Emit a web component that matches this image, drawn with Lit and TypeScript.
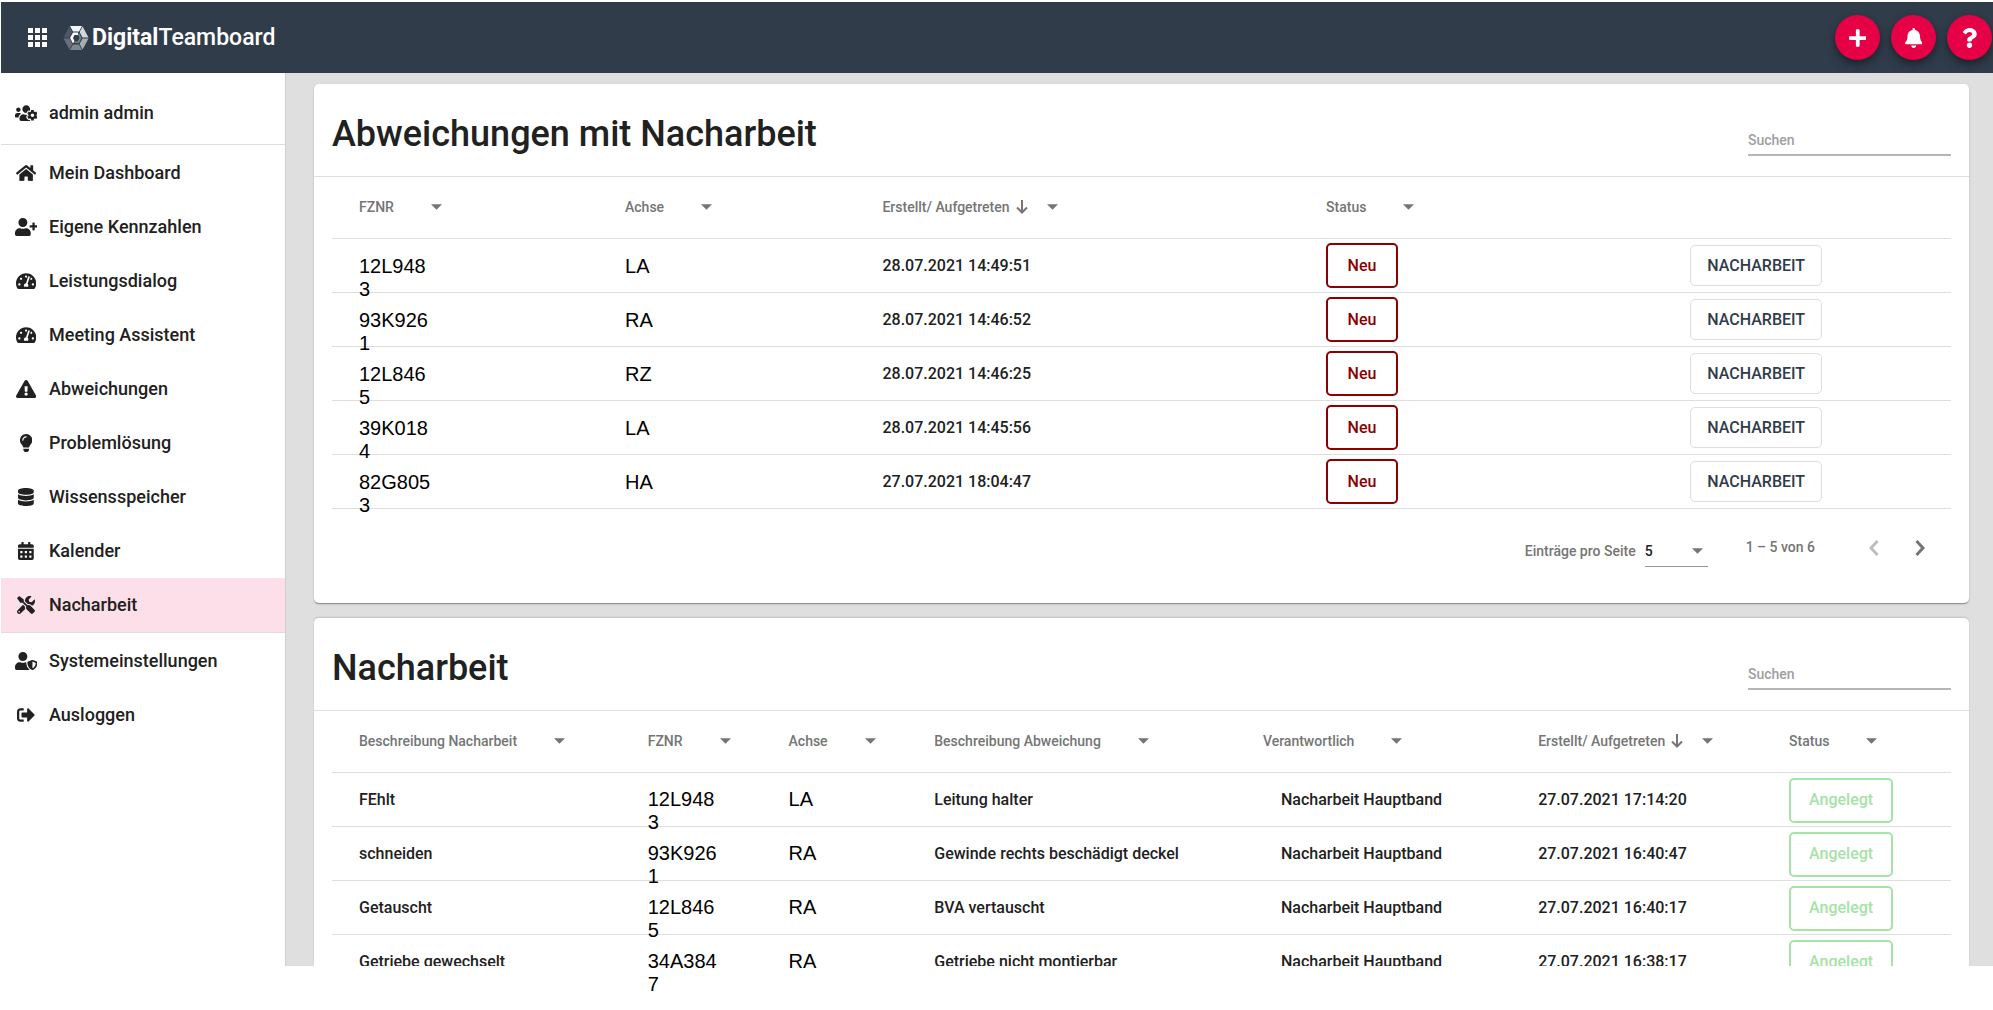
import { LitElement, html, css, svg, nothing } from "lit";
import { customElement, property } from "lit/decorators.js";
import { classMap } from "lit/directives/class-map.js";

type IconDef = { w: number; d: string };

const calCells = [
  [64, 256], [192, 256], [320, 256], [64, 384], [192, 384], [320, 384],
].map(([x, y]) => `M${x} ${y + 12}c0-6.6 5.4-12 12-12h40c6.6 0 12 5.4 12 12v40c0 6.6-5.4 12-12 12h-40c-6.6 0-12-5.4-12-12z`).join("");

const ICONS: Record<string, IconDef> = {
  users: { w: 640, d: "M610.5 341.3c2.6-14.1 2.6-28.5 0-42.6l25.8-14.9c3-1.7 4.3-5.2 3.3-8.5-6.7-21.6-18.2-41.2-33.2-57.4-2.3-2.5-6-3.1-9-1.4l-25.8 14.9c-10.9-9.3-23.4-16.5-36.9-21.3v-29.8c0-3.4-2.4-6.4-5.7-7.1-22.3-5-45-4.8-66.2 0-3.3.7-5.7 3.7-5.7 7.1v29.8c-13.5 4.8-26 12-36.9 21.3l-25.8-14.9c-2.9-1.7-6.7-1.1-9 1.4-15 16.2-26.5 35.8-33.2 57.4-1 3.3.4 6.8 3.3 8.5l25.8 14.9c-2.6 14.1-2.6 28.5 0 42.6l-25.8 14.9c-3 1.7-4.3 5.2-3.3 8.5 6.7 21.6 18.2 41.1 33.2 57.4 2.3 2.5 6 3.1 9 1.4l25.8-14.9c10.9 9.3 23.4 16.5 36.9 21.3v29.8c0 3.4 2.4 6.4 5.7 7.1 22.3 5 45 4.8 66.2 0 3.3-.7 5.7-3.7 5.7-7.1v-29.8c13.5-4.8 26-12 36.9-21.3l25.8 14.9c2.9 1.7 6.7 1.1 9-1.4 15-16.2 26.5-35.8 33.2-57.4 1-3.3-.4-6.8-3.3-8.5l-25.8-14.9zM496 368.5c-26.8 0-48.5-21.8-48.5-48.5s21.8-48.5 48.5-48.5 48.5 21.8 48.5 48.5-21.7 48.5-48.5 48.5zM96 224c35.3 0 64-28.7 64-64s-28.7-64-64-64-64 28.7-64 64 28.7 64 64 64zm224 32c1.9 0 3.7-.5 5.6-.6 8.3-21.7 20.5-42.1 36.3-59.2 7.4-8 17.9-12.6 28.9-12.6 6.9 0 13.7 1.8 19.6 5.3l7.9 4.6c.8-.5 1.6-.9 2.4-1.4 7-14.6 11.2-30.8 11.2-48 0-61.9-50.1-112-112-112S208 82.1 208 144c0 61.9 50.1 112 112 112zm105.2 194.5c-2.3-1.2-4.6-2.6-6.8-3.9-8.2 4.8-15.3 9.8-27.5 9.8-10.9 0-21.4-4.6-28.9-12.6-18.3-19.8-32.3-43.9-40.2-69.6-10.7-34.5 24.9-49.7 25.8-50.3-.1-2.6-.1-5.2 0-7.8l-7.9-4.6c-3.8-2.2-7-5-9.8-8.1-3.3.2-6.5.6-9.8.6-24.6 0-47.6-6-68.5-16h-8.3C179.6 288 128 339.6 128 403.2V432c0 26.5 21.5 48 48 48h255.4c-3.7-6-6.2-12.8-6.2-20.3v-9.2zM173.1 274.6C161.5 263.1 145.6 256 128 256H64c-35.3 0-64 28.7-64 64v32c0 17.7 14.3 32 32 32h65.9c6.3-47.4 34.9-87.3 75.2-109.4z" },
  home: { w: 576, d: "M280.37 148.26L96 300.11V464a16 16 0 0 0 16 16l112.06-.29a16 16 0 0 0 15.92-16V368a16 16 0 0 1 16-16h64a16 16 0 0 1 16 16v95.64a16 16 0 0 0 16 16.05L464 480a16 16 0 0 0 16-16V300L295.67 148.26a12.19 12.19 0 0 0-15.3 0zM571.6 251.47L488 182.56V44.05a12 12 0 0 0-12-12h-56a12 12 0 0 0-12 12v72.61L318.47 43a48 48 0 0 0-61 0L4.34 251.47a12 12 0 0 0-1.6 16.9l25.5 31A12 12 0 0 0 45.15 301l235.22-193.74a12.19 12.19 0 0 1 15.3 0L530.9 301a12 12 0 0 0 16.9-1.6l25.5-31a12 12 0 0 0-1.7-16.93z" },
  userPlus: { w: 640, d: "M624 208h-64v-64c0-8.8-7.2-16-16-16h-32c-8.8 0-16 7.2-16 16v64h-64c-8.8 0-16 7.2-16 16v32c0 8.8 7.2 16 16 16h64v64c0 8.8 7.2 16 16 16h32c8.8 0 16-7.2 16-16v-64h64c8.8 0 16-7.2 16-16v-32c0-8.8-7.2-16-16-16zm-400 48c70.7 0 128-57.3 128-128S294.7 0 224 0 96 57.3 96 128s57.3 128 128 128zm89.6 32h-16.7c-22.2 10.2-46.9 16-72.9 16s-50.6-5.8-72.9-16h-16.7C60.2 288 0 348.2 0 422.4V464c0 26.5 21.5 48 48 48h352c26.5 0 48-21.5 48-48v-41.6c0-74.2-60.2-134.4-134.4-134.4z" },
  gauge: { w: 576, d: "M288 32C128.94 32 0 160.94 0 320c0 52.8 14.25 102.26 39.06 144.8 5.61 9.62 16.3 15.2 27.44 15.2h443c11.14 0 21.83-5.58 27.44-15.2C561.75 422.26 576 372.8 576 320c0-159.06-128.94-288-288-288zm0 64c14.71 0 26.58 10.13 30.32 23.65-1.11 2.26-2.64 4.23-3.45 6.67l-9.22 27.67c-5.13 3.49-10.97 6.01-17.64 6.01-17.67 0-32-14.33-32-32S270.33 96 288 96zM96 384c-17.67 0-32-14.33-32-32s14.33-32 32-32 32 14.33 32 32-14.33 32-32 32zm48-160c-17.67 0-32-14.33-32-32s14.33-32 32-32 32 14.33 32 32-14.33 32-32 32zm246.77-72.41l-61.33 184C343.13 347.33 352 364.54 352 384c0 11.72-3.38 22.55-8.88 32H232.88c-5.5-9.45-8.88-20.28-8.88-32 0-33.94 26.5-61.43 59.9-63.59l61.34-184.01c4.17-12.56 17.73-19.45 30.36-15.17 12.57 4.19 19.35 17.79 15.17 30.36zm14.66 57.2l15.52-46.55c3.47-1.29 7.13-2.23 11.05-2.23 17.67 0 32 14.33 32 32s-14.33 32-32 32c-11.38-.01-20.89-6.28-26.57-15.22zM480 384c-17.67 0-32-14.33-32-32s14.33-32 32-32 32 14.33 32 32-14.33 32-32 32z" },
  warning: { w: 576, d: "M569.517 440.013C587.975 472.007 564.806 512 527.94 512H48.054c-36.937 0-59.999-40.055-41.577-71.987L246.423 23.985c18.467-32.009 64.72-31.951 83.154 0l239.94 416.028zM288 354c-25.405 0-46 20.595-46 46s20.595 46 46 46 46-20.595 46-46-20.595-46-46-46zm-43.673-165.346l7.418 136c.347 6.364 5.609 11.346 11.982 11.346h48.546c6.373 0 11.635-4.982 11.982-11.346l7.418-136c.375-6.874-5.098-12.654-11.982-12.654h-63.383c-6.884 0-12.356 5.78-11.981 12.654z" },
  bulb: { w: 352, d: "M96.06 454.35c.01 6.29 1.87 12.45 5.36 17.69l17.09 25.69a31.99 31.99 0 0 0 26.64 14.28h61.71a31.99 31.99 0 0 0 26.64-14.28l17.09-25.69a31.989 31.989 0 0 0 5.36-17.69l.04-38.35H96.01l.05 38.35zM0 176c0 44.37 16.45 84.85 43.56 115.78 16.52 18.85 42.36 58.23 52.21 91.45.04.26.07.52.11.78h160.24c.04-.26.07-.51.11-.78 9.85-33.22 35.69-72.6 52.21-91.45C335.55 260.85 352 220.37 352 176 352 78.61 272.91-.3 175.45 0 73.44.31 0 82.97 0 176zm176-80c-44.11 0-80 35.89-80 80 0 8.84-7.16 16-16 16s-16-7.16-16-16c0-61.76 50.24-112 112-112 8.84 0 16 7.16 16 16s-7.16 16-16 16z" },
  database: { w: 448, d: "M448 73.143v45.714C448 159.143 347.667 192 224 192S0 159.143 0 118.857V73.143C0 32.857 100.333 0 224 0s224 32.857 224 73.143zM448 176v102.857C448 319.143 347.667 352 224 352S0 319.143 0 278.857V176c48.125 33.143 136.208 48.572 224 48.572S399.874 209.143 448 176zm0 160v102.857C448 479.143 347.667 512 224 512S0 479.143 0 438.857V336c48.125 33.143 136.208 48.572 224 48.572S399.874 369.143 448 336z" },
  calendar: { w: 448, d: "M0 464c0 26.5 21.5 48 48 48h352c26.5 0 48-21.5 48-48V192H0zM400 64h-48V16c0-8.8-7.2-16-16-16h-32c-8.8 0-16 7.2-16 16v48H160V16c0-8.8-7.2-16-16-16h-32c-8.8 0-16 7.2-16 16v48H48C21.5 64 0 85.5 0 112v48h448v-48c0-26.5-21.5-48-48-48z" + calCells },
  tools: { w: 512, d: "M501.1 395.7L384 278.6c-23.1-23.1-57.6-27.6-85.4-13.9L192 158.1V96L64 0 0 64l96 128h62.1l106.6 106.6c-13.6 27.8-9.2 62.3 13.9 85.4l117.1 117.1c14.6 14.6 38.2 14.6 52.7 0l52.7-52.7c14.5-14.6 14.5-38.2 0-52.7zM331.7 225c28.3 0 54.9 11 74.9 31l19.4 19.4c15.8-6.9 30.8-16.5 43.8-29.5 37.1-37.1 49.7-89.3 37.9-136.7-2.2-9-13.5-12.1-20.1-5.5l-74.4 74.4-67.9-11.3L334 98.9l74.4-74.4c6.6-6.6 3.4-17.9-5.7-20.2-47.4-11.7-99.6.9-136.6 37.9-28.5 28.5-41.9 66.1-41.2 103.6l82.1 82.1c8.1-1.9 16.5-2.9 24.7-2.9zm-103.9 82l-56.7-56.7L18.7 402.8c-25 25-25 65.5 0 90.5s65.5 25 90.5 0l123.6-123.6c-7.6-19.9-9.9-41.6-5-62.7zM64 472c-13.2 0-24-10.8-24-24 0-13.3 10.7-24 24-24s24 10.7 24 24c0 13.2-10.7 24-24 24z" },
  userShield: { w: 640, d: "M622.3 271.1l-115.2-45c-4.1-1.6-12.6-3.7-22.2 0l-115.2 45c-10.7 4.2-17.7 14-17.7 24.9 0 111.6 68.7 188.8 132.9 213.9 9.6 3.7 18 1.6 22.2 0C558.4 489.9 640 420.5 640 296c0-10.9-7-20.7-17.7-24.9zM496 462.4V273.3l95.5 37.3c-5.6 87.1-60.9 135.4-95.5 151.8zM224 256c70.7 0 128-57.3 128-128S294.7 0 224 0 96 57.3 96 128s57.3 128 128 128zm96 40c0-2.5.8-4.8 1.1-7.2-2.5-.1-4.9-.8-7.5-.8h-16.7c-22.2 10.2-46.9 16-72.9 16s-50.6-5.8-72.9-16h-16.7C60.2 288 0 348.2 0 422.4V464c0 26.5 21.5 48 48 48h352c6.8 0 13.3-1.5 19.2-4-54-42.9-99.2-116.7-99.2-212z" },
  logout: { w: 512, d: "M497 273L329 441c-15 15-41 4.5-41-17v-96H152c-13.3 0-24-10.7-24-24v-96c0-13.3 10.7-24 24-24h136V88c0-21.4 25.9-32 41-17l168 168c9.3 9.4 9.3 24.6 0 34zM192 436v-40c0-6.6-5.4-12-12-12H96c-17.7 0-32-14.3-32-32V160c0-17.7 14.3-32 32-32h84c6.6 0 12-5.4 12-12V76c0-6.6-5.4-12-12-12H96c-53 0-96 43-96 96v192c0 53 43 96 96 96h84c6.6 0 12-5.4 12-12z" },
  plus: { w: 448, d: "M416 208H272V64c0-17.67-14.33-32-32-32h-32c-17.67 0-32 14.33-32 32v144H32c-17.67 0-32 14.33-32 32v32c0 17.67 14.33 32 32 32h144v144c0 17.67 14.33 32 32 32h32c17.67 0 32-14.33 32-32V304h144c17.67 0 32-14.33 32-32v-32c0-17.67-14.33-32-32-32z" },
  bell: { w: 448, d: "M224 512c35.32 0 63.97-28.65 63.97-64H160.03c0 35.35 28.65 64 63.97 64zm215.39-149.71c-19.32-20.76-55.47-51.99-55.47-154.29 0-77.7-54.48-139.9-127.94-155.16V32c0-17.67-14.32-32-31.98-32s-31.98 14.33-31.98 32v20.84C118.56 68.1 64.08 130.3 64.08 208c0 102.3-36.15 133.53-55.47 154.29-6 6.45-8.66 14.16-8.61 21.71.11 16.4 12.98 32 32.1 32h383.8c19.12 0 32-15.6 32.1-32 .05-7.55-2.61-15.27-8.61-21.71z" },
  question: { w: 384, d: "M202.021 0C122.202 0 70.503 32.703 29.914 91.026c-7.363 10.58-5.093 25.086 5.178 32.874l43.138 32.709c10.373 7.865 25.132 6.026 33.253-4.148 25.049-31.381 43.63-49.449 82.757-49.449 30.764 0 68.816 19.799 68.816 49.631 0 22.552-18.617 34.134-48.993 51.164-35.423 19.86-82.299 44.576-82.299 106.405V320c0 13.255 10.745 24 24 24h72.471c13.255 0 24-10.745 24-24v-5.773c0-42.86 125.268-44.645 125.268-160.627C377.504 66.256 286.902 0 202.021 0zM192 373.459c-38.196 0-69.271 31.075-69.271 69.271 0 38.195 31.075 69.27 69.271 69.27s69.271-31.075 69.271-69.271-31.075-69.27-69.271-69.27z" },
};

const icon = (name: string) => {
  const { w, d } = ICONS[name];
  return html`<svg class="icon" viewBox="0 0 ${w} 512" aria-hidden="true">${svg`<path fill-rule="evenodd" d=${d} />`}</svg>`;
};

const caret = html`<svg class="caret" viewBox="0 0 12 6" aria-hidden="true"><path d="M0 0h12L6 6z" /></svg>`;

@customElement("team-topbar")
class TeamTopbar extends LitElement {
  static styles = css`
    :host {
      display: flex;
      align-items: center;
      height: 71px;
      padding: 0 1px 0 27px;
      box-sizing: border-box;
      background: #303c4a;
      color: #fff;
    }
    button {
      border: 0;
      padding: 0;
      color: inherit;
      background: none;
      cursor: pointer;
      display: grid;
      place-items: center;
    }
    .apps svg { width: 19px; height: 19px; fill: #fff; }
    .brand {
      display: flex;
      align-items: center;
      gap: 3px;
      margin-left: 16px;
      color: inherit;
      text-decoration: none;
      font-size: 23px;
      line-height: 28px;
      font-weight: 500;
    }
    .brand b { font-weight: 700; }
    .logo { width: 26px; height: 26px; }
    .actions { display: flex; gap: 11px; margin-left: auto; }
    .round {
      width: 45px;
      height: 45px;
      border-radius: 50%;
      background: #e60046;
      box-shadow: 0 3px 6px rgba(0, 0, 0, 0.3), 0 6px 12px rgba(0, 0, 0, 0.16);
    }
    .icon { height: 20px; fill: #fff; }
  `;
  render() {
    return html`
      <button class="apps" aria-label="Apps">
        <svg viewBox="0 0 19 19" aria-hidden="true">
          ${[0, 7, 14].map((y) => [0, 7, 14].map((x) => svg`<rect x=${x} y=${y} width="5" height="5" />`))}
        </svg>
      </button>
      <a class="brand" href="#">
        <svg class="logo" viewBox="0 0 26 26" aria-hidden="true">
          <path fill="#f4f5f6" d="M7 1h12l-3 5.500h-6z" />
          <path fill="#d5d8db" d="M19.600 1.500L25.500 12.500H19.500L16.600 7z" />
          <path fill="#a7adb3" d="M25.500 13.500L19.600 24.500L16.600 19L19.500 13.500z" />
          <path fill="#7e868f" d="M7 25h12l-3-5.500h-6z" />
          <path fill="#66707b" d="M.5 13.500L6.400 24.500L9.400 19L6.500 13.500z" />
          <path fill="#4d5864" d="M6.400 1.500L.5 12.500H6.500L9.400 7z" />
          <path fill="#fff" d="M10 7.500L7 13l3 5.500l1.500-2.500L10 13l1.500-3h3.500V7.500z" />
          <path fill="#77808a" d="M16 8l2.500 5L16 18h-4.500v-1.500h3L16.500 13L15 9.500z" />
        </svg>
        <span><b>Digital</b>Teamboard</span>
      </a>
      <div class="actions">
        <button class="round" aria-label="Neu anlegen">${icon("plus")}</button>
        <button class="round" aria-label="Benachrichtigungen">${icon("bell")}</button>
        <button class="round" aria-label="Hilfe">${icon("question")}</button>
      </div>
    `;
  }
}

const MENU = [
  ["home", "Mein Dashboard"],
  ["userPlus", "Eigene Kennzahlen"],
  ["gauge", "Leistungsdialog"],
  ["gauge", "Meeting Assistent"],
  ["warning", "Abweichungen"],
  ["bulb", "Problemlösung"],
  ["database", "Wissensspeicher"],
  ["calendar", "Kalender"],
  ["tools", "Nacharbeit"],
];
const ACCOUNT_MENU = [
  ["userShield", "Systemeinstellungen"],
  ["logout", "Ausloggen"],
];

@customElement("team-sidebar")
class TeamSidebar extends LitElement {
  @property() active = "Nacharbeit";
  static styles = css`
    :host {
      display: block;
      background: #fff;
      border-right: 1px solid #cfcfcf;
    }
    .group { padding-top: 1px; }
    .user { padding: 13px 0 4px; }
    .group + .group { border-top: 1px solid #dedede; }
    .item {
      display: flex;
      align-items: center;
      gap: 11px;
      height: 54px;
      padding-left: 13px;
      color: #212121;
      text-decoration: none;
      font-size: 18px;
      line-height: 24px;
      font-weight: 500;
    }
    .item.active { background: #fcdfe9; }
    .mark { flex: none; width: 24px; display: grid; place-items: center; }
    .icon { height: 18px; fill: #212121; }
  `;
  private item = ([name, label]: string[]) => html`
    <a href="#" class=${classMap({ item: true, active: label === this.active })}
      aria-current=${label === this.active ? "page" : nothing}>
      <span class="mark">${icon(name)}</span>${label}
    </a>`;
  render() {
    return html`
      <div class="group user">${this.item(["users", "admin admin"])}</div>
      <nav class="group">${MENU.map(this.item)}</nav>
      <div class="group">${ACCOUNT_MENU.map(this.item)}</div>
    `;
  }
}

type Kind = "text" | "code" | "plain" | "indent" | "neu" | "angelegt" | "action";
type Column = { label: string; width: number; kind: Kind; sorted?: boolean };

@customElement("data-card")
class DataCard extends LitElement {
  @property() heading = "";
  @property({ attribute: false }) columns: Column[] = [];
  @property({ attribute: false }) rows: string[][] = [];
  @property({ type: Boolean }) paged = false;
  @property({ type: Boolean, reflect: true }) cut = false;

  static styles = css`
    :host {
      display: block;
      background: #fff;
      border-radius: 5px;
      box-shadow: 0 2px 1px -1px rgba(0, 0, 0, 0.2), 0 1px 1px rgba(0, 0, 0, 0.14), 0 1px 3px rgba(0, 0, 0, 0.12);
    }
    :host([cut]) { border-radius: 5px 5px 0 0; box-shadow: 0 -1px 2px rgba(0, 0, 0, 0.14); }
    .head {
      display: flex;
      justify-content: space-between;
      align-items: flex-end;
      padding: 28px 18px 20px;
      border-bottom: 1px solid #dedede;
    }
    h1 { margin: 0; font-size: 36px; line-height: 44px; font-weight: 500; color: #212121; }
    input {
      width: 203px;
      height: 32px;
      box-sizing: border-box;
      padding: 2px 0 0;
      border: 0;
      border-bottom: 2px solid #b5b5b5;
      background: none;
      font: 500 14px/20px Roboto, sans-serif;
      color: #212121;
      outline: none;
    }
    input::placeholder { color: #9e9e9e; opacity: 1; }
    .hidden {
      position: absolute;
      width: 1px;
      height: 1px;
      overflow: hidden;
      clip-path: inset(50%);
      white-space: nowrap;
    }
    .body { padding: 0 18px; }
    table { width: 100%; table-layout: fixed; border-spacing: 0; }
    th, td { padding: 0; text-align: left; border-bottom: 1px solid #dedede; white-space: nowrap; }
    th:first-child, td:first-child { padding-left: 27px; }
    th { height: 61px; color: #757575; font-size: 14px; line-height: 20px; font-weight: 500; }
    .th { display: flex; align-items: center; padding-bottom: 2px; }
    .sort { width: 37px; padding-left: 6px; box-sizing: border-box; display: flex; }
    .sort svg { width: 12px; height: 14px; fill: none; stroke: #757575; stroke-width: 2; }
    button { cursor: pointer; font-family: inherit; }
    .th button, .pager button { border: 0; padding: 0; background: none; display: flex; }
    .caret { width: 11px; height: 6px; fill: #757575; }
    td { color: #212121; font-size: 16px; line-height: 24px; font-weight: 500; }
    .cell { height: 53px; display: flex; align-items: center; }
    .indent { padding-left: 18px; }
    .code, .plain { font: 400 20px/23px "Liberation Sans", Arial, sans-serif; color: #000; }
    .code {
      display: block;
      width: 74px;
      padding-top: 16px;
      box-sizing: border-box;
      white-space: normal;
      word-break: break-all;
    }
    .plain { align-items: flex-start; padding-top: 16px; box-sizing: border-box; }
    :host([cut]) .code, :host([cut]) .plain { padding-top: 15px; }
    .badge {
      height: 45px;
      min-width: 72px;
      padding: 0 18px;
      box-sizing: border-box;
      border: 2px solid;
      border-radius: 5px;
      display: grid;
      place-items: center;
    }
    .neu .badge { color: #8b0000; }
    .angelegt .badge { color: #a5e3a7; }
    .angelegt { padding-top: 1px; box-sizing: border-box; }
    .action button {
      height: 41px;
      padding: 0 16px;
      border: 1px solid #dedede;
      border-radius: 5px;
      background: #fff;
      color: #303c4a;
      font-size: 16px;
      line-height: 24px;
      font-weight: 500;
    }
    :host([cut]) tr:last-child td { border-bottom: 0; vertical-align: top; }
    .peek { height: 31px; overflow: hidden; }
    .spill { height: 31px; }
    .pager {
      display: flex;
      align-items: center;
      justify-content: flex-end;
      height: 78px;
      padding: 0 26px 16px 0;
      color: #757575;
      font-size: 14px;
      line-height: 20px;
      font-weight: 500;
    }
    .size { display: flex; align-items: center; gap: 9px; padding-top: 6px; }
    .pick { display: grid; grid-template-columns: 63px; align-items: center; }
    .pick > * { grid-area: 1 / 1; }
    .pick .caret { justify-self: end; margin-right: 5px; pointer-events: none; }
    select {
      appearance: none;
      height: 31px;
      padding: 0;
      border: 0;
      border-bottom: 1px solid #949494;
      border-radius: 0;
      background: none;
      color: #212121;
      font: 500 14px/20px Roboto, sans-serif;
    }
    .range { margin: 0 54px 2px 38px; }
    .nav { display: flex; gap: 36px; }
    .nav svg { width: 10px; height: 16px; fill: none; stroke: #757575; stroke-width: 3; }
    .nav button:disabled svg { stroke: #bdbdbd; }
  `;

  private content(kind: Kind, text: string) {
    if (kind === "neu" || kind === "angelegt") return html`<span class="badge">${text}</span>`;
    if (kind === "action") return html`<button>${text}</button>`;
    return text;
  }

  private cell(column: Column, text: string, last: boolean) {
    const inner = html`<div class="cell ${column.kind}">${this.content(column.kind, text)}</div>`;
    if (!this.cut || !last) return html`<td>${inner}</td>`;
    const spills = column.kind === "code" || column.kind === "plain";
    return html`<td><div class=${spills ? "spill" : "peek"}>${inner}</div></td>`;
  }

  render() {
    return html`
      <div class="head">
        <h1>${this.heading}</h1>
        <label class="hidden" for="search"></label>
        <input id="search" type="text" placeholder="Suchen" aria-label="Suchen" />
      </div>
      <div class="body">
        <table>
          <colgroup>${this.columns.map((c) => html`<col style="width:${c.width}%" />`)}</colgroup>
          <thead>
            <tr>
              ${this.columns.map((c) => html`<th scope="col">${c.label
                ? html`<div class="th">${c.label}<span class="sort">${c.sorted
                    ? html`<svg viewBox="0 0 12 14" aria-label="absteigend sortiert"><path d="M6 0v12M1 7.500l5 5l5-5" /></svg>`
                    : nothing}</span><button aria-label="${c.label} filtern">${caret}</button></div>`
                : nothing}</th>`)}
            </tr>
          </thead>
          <tbody>
            ${this.rows.map((row, i) => html`<tr>${this.columns.map((c, j) => this.cell(c, row[j], i === this.rows.length - 1))}</tr>`)}
          </tbody>
        </table>
        ${this.paged ? html`
          <div class="pager">
            <div class="size">
              <label for="size">Einträge pro Seite</label>
              <div class="pick"><select id="size"><option>5</option></select>${caret}</div>
            </div>
            <span class="range">1 – 5 von 6</span>
            <div class="nav">
              <button disabled aria-label="Vorherige Seite"><svg viewBox="0 0 10 16"><path d="M8.500 1L2 8l6.500 7" /></svg></button>
              <button aria-label="Nächste Seite"><svg viewBox="0 0 10 16"><path d="M1.500 1L8 8l-6.500 7" /></svg></button>
            </div>
          </div>` : nothing}
      </div>
    `;
  }
}

const DEVIATION_COLUMNS: Column[] = [
  { label: "FZNR", width: 18.1, kind: "code" },
  { label: "Achse", width: 15.9, kind: "plain" },
  { label: "Erstellt/ Aufgetreten", width: 27.4, kind: "text", sorted: true },
  { label: "Status", width: 22.5, kind: "neu" },
  { label: "", width: 16.1, kind: "action" },
];
const DEVIATIONS = [
  ["12L9483", "LA", "28.07.2021 14:49:51"],
  ["93K9261", "RA", "28.07.2021 14:46:52"],
  ["12L8465", "RZ", "28.07.2021 14:46:25"],
  ["39K0184", "LA", "28.07.2021 14:45:56"],
  ["82G8053", "HA", "27.07.2021 18:04:47"],
].map((row) => [...row, "Neu", "NACHARBEIT"]);

const REWORK_COLUMNS: Column[] = [
  { label: "Beschreibung Nacharbeit", width: 19.5, kind: "text" },
  { label: "FZNR", width: 8.7, kind: "code" },
  { label: "Achse", width: 9, kind: "plain" },
  { label: "Beschreibung Abweichung", width: 20.3, kind: "text" },
  { label: "Verantwortlich", width: 17, kind: "indent" },
  { label: "Erstellt/ Aufgetreten", width: 15.5, kind: "text", sorted: true },
  { label: "Status", width: 10, kind: "angelegt" },
];
const REWORK = [
  ["FEhlt", "12L9483", "LA", "Leitung halter", "27.07.2021 17:14:20"],
  ["schneiden", "93K9261", "RA", "Gewinde rechts beschädigt deckel", "27.07.2021 16:40:47"],
  ["Getauscht", "12L8465", "RA", "BVA vertauscht", "27.07.2021 16:40:17"],
  ["Getriebe gewechselt", "34A3847", "RA", "Getriebe nicht montierbar", "27.07.2021 16:38:17"],
].map(([text, code, axle, deviation, date]) => [text, code, axle, deviation, "Nacharbeit Hauptband", date, "Angelegt"]);

@customElement("app-root")
class AppRoot extends LitElement {
  static styles = css`
    :host {
      display: block;
      min-height: 100vh;
      box-sizing: border-box;
      padding: 2px 0 24px 1px;
      background: #fff;
      font-family: Roboto, sans-serif;
    }
    .layout { display: grid; grid-template-columns: 285px minmax(0, 1fr); }
    main {
      display: flex;
      flex-direction: column;
      gap: 15px;
      padding: 11px 24px 0 28px;
      background: #dfdfdf;
    }
  `;
  render() {
    return html`
      <team-topbar></team-topbar>
      <div class="layout">
        <team-sidebar></team-sidebar>
        <main>
          <data-card heading="Abweichungen mit Nacharbeit" paged .columns=${DEVIATION_COLUMNS} .rows=${DEVIATIONS}></data-card>
          <data-card heading="Nacharbeit" cut .columns=${REWORK_COLUMNS} .rows=${REWORK}></data-card>
        </main>
      </div>
    `;
  }
}
